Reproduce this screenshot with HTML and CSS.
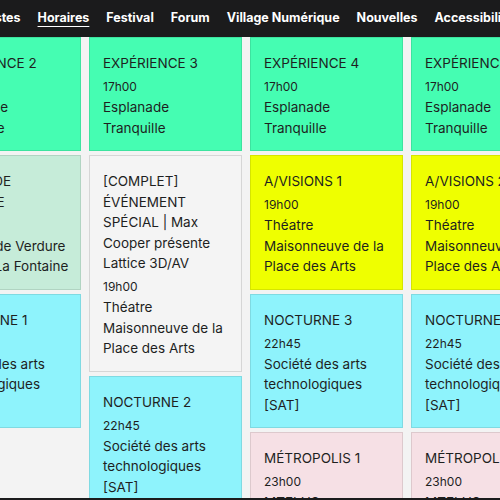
FILE: index.html
```html
<!DOCTYPE html>
<html lang="fr">
<head>
<meta charset="utf-8">
<title>Horaires</title>
<link rel="stylesheet" href="styles.css">
</head>
<body>
<nav class="nav">
  <ul class="nav-list">
    <li class="nav-item">Artistes</li>
    <li class="nav-item active">Horaires</li>
    <li class="nav-item">Festival</li>
    <li class="nav-item">Forum</li>
    <li class="nav-item">Village Numérique</li>
    <li class="nav-item">Nouvelles</li>
    <li class="nav-item">Accessibilité</li>
  </ul>
</nav>
<main class="grid">
  <div class="col">
    <div class="card green"><div class="title">EXPÉRIENCE 2</div><div class="time">17h00</div><div class="venue">Esplanade Tranquille</div></div>
    <div class="card sage"><div class="title">SOIRÉE DE CLÔTURE</div><div class="time">19h00</div><div class="venue">Théâtre de Verdure du Parc La Fontaine</div></div>
    <div class="card cyan"><div class="title">NOCTURNE 1</div><div class="time">22h45</div><div class="venue">Société des arts technologiques [SAT]</div></div>
  </div>
  <div class="col">
    <div class="card green"><div class="title">EXPÉRIENCE 3</div><div class="time">17h00</div><div class="venue">Esplanade Tranquille</div></div>
    <div class="card grey"><div class="title">[COMPLET] ÉVÉNEMENT SPÉCIAL | Max Cooper présente Lattice 3D/AV</div><div class="time">19h00</div><div class="venue">Théatre Maisonneuve de la Place des Arts</div></div>
    <div class="card cyan"><div class="title">NOCTURNE 2</div><div class="time">22h45</div><div class="venue">Société des arts technologiques [SAT]</div></div>
  </div>
  <div class="col">
    <div class="card green"><div class="title">EXPÉRIENCE 4</div><div class="time">17h00</div><div class="venue">Esplanade Tranquille</div></div>
    <div class="card yellow"><div class="title">A/VISIONS 1</div><div class="time">19h00</div><div class="venue">Théatre Maisonneuve de la Place des Arts</div></div>
    <div class="card cyan"><div class="title">NOCTURNE 3</div><div class="time">22h45</div><div class="venue">Société des arts technologiques [SAT]</div></div>
    <div class="card pink"><div class="title">MÉTROPOLIS 1</div><div class="time">23h00</div><div class="venue">MTELUS</div></div>
  </div>
  <div class="col">
    <div class="card green"><div class="title">EXPÉRIENCE 5</div><div class="time">17h00</div><div class="venue">Esplanade Tranquille</div></div>
    <div class="card yellow"><div class="title">A/VISIONS 2</div><div class="time">19h00</div><div class="venue">Théatre Maisonneuve de la Place des Arts</div></div>
    <div class="card cyan"><div class="title">NOCTURNE 4</div><div class="time">22h45</div><div class="venue">Société des arts technologiques [SAT]</div></div>
    <div class="card pink"><div class="title">MÉTROPOLIS 2</div><div class="time">23h00</div><div class="venue">MTELUS</div></div>
  </div>
</main>
<div class="bottom-bar"></div>
</body>
</html>
```
FILE: styles.css
```css
html, body {
  margin: 0;
  padding: 0;
  height: 100%;
  overflow: hidden;
  background: #f3f3f3;
  font-family: Inter, "Noto Sans", sans-serif;
  color: #1e1f1f;
}

.nav {
  height: 37px;
  background: #1b1b1c;
  overflow: hidden;
  white-space: nowrap;
}

.nav-list {
  list-style: none;
  margin: 0 0 0 -28px;
  padding: 0;
  display: flex;
  gap: 17px;
  height: 37px;
  align-items: center;
}

.nav-item {
  color: #ffffff;
  font-weight: 700;
  font-size: 12.5px;
  line-height: 16px;
  margin-top: -2px;
  flex: none;
}

.nav-item.active {
  text-decoration: underline;
  text-decoration-thickness: 1px;
  text-underline-offset: 4px;
}

.grid {
  display: flex;
  gap: 8px;
  margin-left: -72px;
  align-items: flex-start;
}

.col {
  width: 153px;
  flex: none;
  display: flex;
  flex-direction: column;
  gap: 4px;
}

.card {
  border: 1px solid rgba(0, 0, 0, 0.1);
  padding: 15px 8px 12px 13px;
}

.title {
  font-size: 13.5px;
  line-height: 20.5px;
}

.time {
  font-size: 12px;
  line-height: 20px;
  margin-top: 3.5px;
}

.venue {
  font-size: 13.5px;
  line-height: 20.5px;
}

.green { background: #45fdb2; }
.sage { background: #c6ecd9; }
.cyan { background: #8ef3fc; }
.grey { background: #f4f4f4; border-color: #d6d6d6; }
.yellow { background: #efff00; }
.pink { background: #f6e0e5; }

.bottom-bar {
  position: fixed;
  left: 0;
  right: 0;
  bottom: 0;
  height: 2px;
  background: #1b1b1c;
}
```
